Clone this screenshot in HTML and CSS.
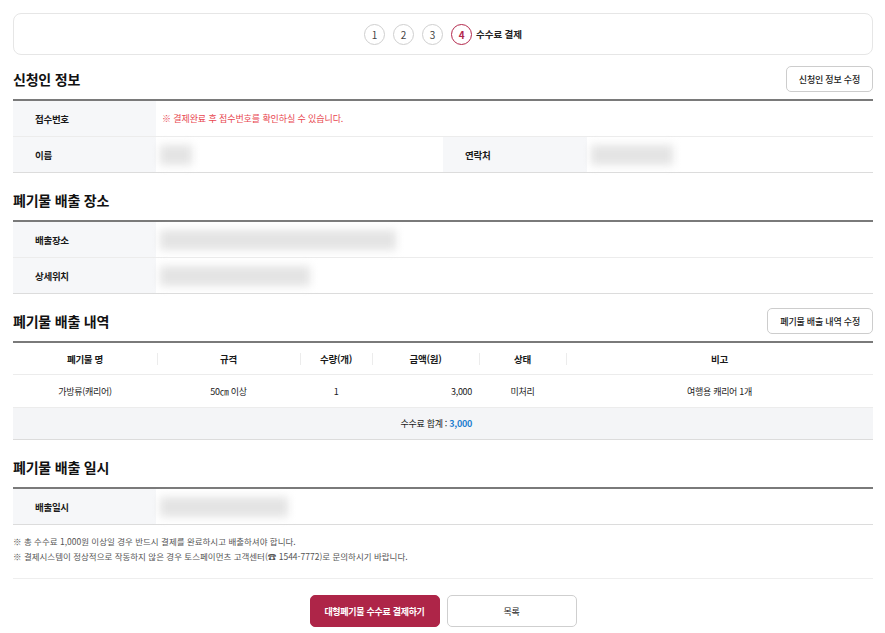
FILE: index.html
```html
<!DOCTYPE html>
<html lang="ko">
<head>
  <meta charset="UTF-8">
  <meta name="viewport" content="width=device-width, initial-scale=1.0">
  <title>대형폐기물 수수료 결제</title>
  <link rel="stylesheet" href="styles.css">
</head>
<body>

<div class="wrap">
  <div class="steps">
    <span class="step">1</span>
    <span class="step">2</span>
    <span class="step">3</span>
    <span class="step on">4</span>
    <span class="step-name">수수료 결제</span>
  </div>

  <div class="sec-head">
    <h2>신청인 정보</h2>
    <button type="button" class="btn-line">신청인 정보 수정</button>
  </div>
  <table class="info">
    <colgroup>
      <col style="width:143px"><col style="width:287px"><col style="width:144px"><col>
    </colgroup>
    <tr>
      <th>접수번호</th>
      <td colspan="3" class="notice">※ 결제완료 후 접수번호를 확인하실 수 있습니다.</td>
    </tr>
    <tr>
      <th>이름</th>
      <td><span class="blur" style="width:32px"></span></td>
      <th>연락처</th>
      <td><span class="blur" style="width:82px"></span></td>
    </tr>
  </table>

  <div class="sec-head">
    <h2>폐기물 배출 장소</h2>
  </div>
  <table class="info">
    <colgroup>
      <col style="width:143px"><col>
    </colgroup>
    <tr>
      <th>배출장소</th>
      <td><span class="blur" style="width:236px"></span></td>
    </tr>
    <tr>
      <th>상세위치</th>
      <td><span class="blur" style="width:150px"></span></td>
    </tr>
  </table>

  <div class="sec-head">
    <h2>폐기물 배출 내역</h2>
    <button type="button" class="btn-line">폐기물 배출 내역 수정</button>
  </div>
  <table class="list">
    <colgroup>
      <col style="width:144px"><col style="width:143px"><col style="width:72px"><col style="width:107px"><col style="width:87px"><col>
    </colgroup>
    <thead>
      <tr>
        <th>폐기물 명</th>
        <th>규격</th>
        <th>수량(개)</th>
        <th>금액(원)</th>
        <th>상태</th>
        <th>비고</th>
      </tr>
    </thead>
    <tbody>
      <tr>
        <td>가방류(캐리어)</td>
        <td>50㎝ 이상</td>
        <td>1</td>
        <td class="num">3,000</td>
        <td>미처리</td>
        <td>여행용 캐리어 1개</td>
      </tr>
      <tr class="total">
        <td colspan="4" class="num">수수료 합계 : <em>3,000</em></td>
        <td></td>
        <td></td>
      </tr>
    </tbody>
  </table>

  <div class="sec-head">
    <h2>폐기물 배출 일시</h2>
  </div>
  <table class="info">
    <colgroup>
      <col style="width:143px"><col>
    </colgroup>
    <tr>
      <th>배출일시</th>
      <td><span class="blur" style="width:128px"></span></td>
    </tr>
  </table>

  <ul class="notes">
    <li>※ 총 수수료 1,000원 이상일 경우 반드시 결제를 완료하시고 배출하셔야 합니다.</li>
    <li>※ 결제시스템이 정상적으로 작동하지 않은 경우 토스페이먼츠 고객센터(☎ 1544-7772)로 문의하시기 바랍니다.</li>
  </ul>

  <div class="btns">
    <button type="button" class="btn btn-pay">대형폐기물 수수료 결제하기</button>
    <button type="button" class="btn btn-list">목록</button>
  </div>
</div>

</body>
</html>
```

FILE: styles.css
```css
body {
  margin: 0;
  padding: 0;
  background-color: #fff;
  color: #1a1a1a;
  font-family: "Noto Sans CJK KR", "Noto Sans", sans-serif;
  font-size: 9px;
  letter-spacing: -0.3px;
}
.wrap {
  padding: 13px 12px 0 13px;
}
.steps {
  height: 40px;
  border: 1px solid #e6e6e6;
  border-radius: 8px;
  display: flex;
  align-items: center;
  justify-content: center;
  gap: 8px;
}
.step {
  width: 19px;
  height: 19px;
  border: 1px solid #cfcfcf;
  border-radius: 50%;
  display: flex;
  align-items: center;
  justify-content: center;
  font-size: 10px;
  color: #444;
  letter-spacing: 0;
}
.step.on {
  border-color: #b3284c;
  color: #b3284c;
  font-weight: bold;
}
.step-name {
  margin-left: -4px;
  font-weight: bold;
  font-size: 9.5px;
  letter-spacing: -0.1px;
  color: #222;
}
.sec-head {
  display: flex;
  align-items: center;
  justify-content: space-between;
  height: 26px;
  margin: 11px 0 7px;
}
.sec-head h2 {
  margin: 0;
  font-size: 14px;
  font-weight: bold;
  color: #111;
  letter-spacing: -0.2px;
}
.btn-line {
  height: 26px;
  padding: 0 12px;
  background: #fff;
  border: 1px solid #cdcdcd;
  border-radius: 5px;
  font-family: inherit;
  font-size: 9px;
  font-weight: 500;
  letter-spacing: -0.2px;
  color: #222;
  cursor: pointer;
}
table {
  width: 100%;
  border-collapse: collapse;
  table-layout: fixed;
}
.info {
  border-top: 2px solid #7a7a7a;
  border-bottom: 1px solid #dcdcdc;
  margin-bottom: 14px;
}
.info th,
.info td {
  height: 35px;
  padding: 0;
  border-top: 1px solid #ececec;
  font-size: 9.5px;
  vertical-align: middle;
}
.info tr:first-child th,
.info tr:first-child td {
  border-top: none;
}
.info th {
  background-color: #f6f7f9;
  text-align: left;
  padding-left: 22px;
  font-weight: bold;
  color: #1a1a1a;
}
.info td {
  padding-left: 4px;
}
.info td.notice {
  padding-left: 6px;
  font-size: 9px;
  letter-spacing: -0.1px;
  color: #e8464f;
}
.blur {
  display: inline-block;
  height: 20px;
  vertical-align: middle;
  background-color: #e4e4e4;
  filter: blur(4px);
}
.list {
  border-top: 2px solid #7a7a7a;
  border-bottom: 1px solid #dcdcdc;
  margin-bottom: 14px;
}
.list th,
.list td {
  padding: 0 7px;
  text-align: center;
  vertical-align: middle;
}
.list th {
  height: 31px;
  font-size: 9.5px;
  font-weight: bold;
  position: relative;
}
.list th + th::before {
  content: "";
  position: absolute;
  left: 0;
  top: 10px;
  height: 12px;
  border-left: 1px solid #ececec;
}
.list td {
  height: 32px;
  border-top: 1px solid #ececec;
  font-size: 9px;
}
.list td.num {
  text-align: right;
}
.list .total td {
  background-color: #f4f5f7;
  height: 31px;
}
.list .total em {
  font-style: normal;
  font-weight: bold;
  color: #1f80cf;
}
.notes {
  list-style: none;
  margin: -5px 0 0;
  padding: 0;
  font-size: 8.5px;
  letter-spacing: 0;
  line-height: 15px;
  color: #555;
}
.btns {
  margin-top: 14px;
  padding-top: 16px;
  border-top: 1px solid #eeeeee;
  display: flex;
  justify-content: center;
  gap: 7px;
}
.btn {
  width: 130px;
  height: 32px;
  border-radius: 5px;
  font-family: inherit;
  font-size: 9px;
  letter-spacing: -0.3px;
  cursor: pointer;
}
.btn-pay {
  background-color: #ae2548;
  border: 1px solid #ae2548;
  color: #fff;
  font-weight: bold;
}
.btn-list {
  background-color: #fff;
  border: 1px solid #cfcfcf;
  color: #222;
}
```
